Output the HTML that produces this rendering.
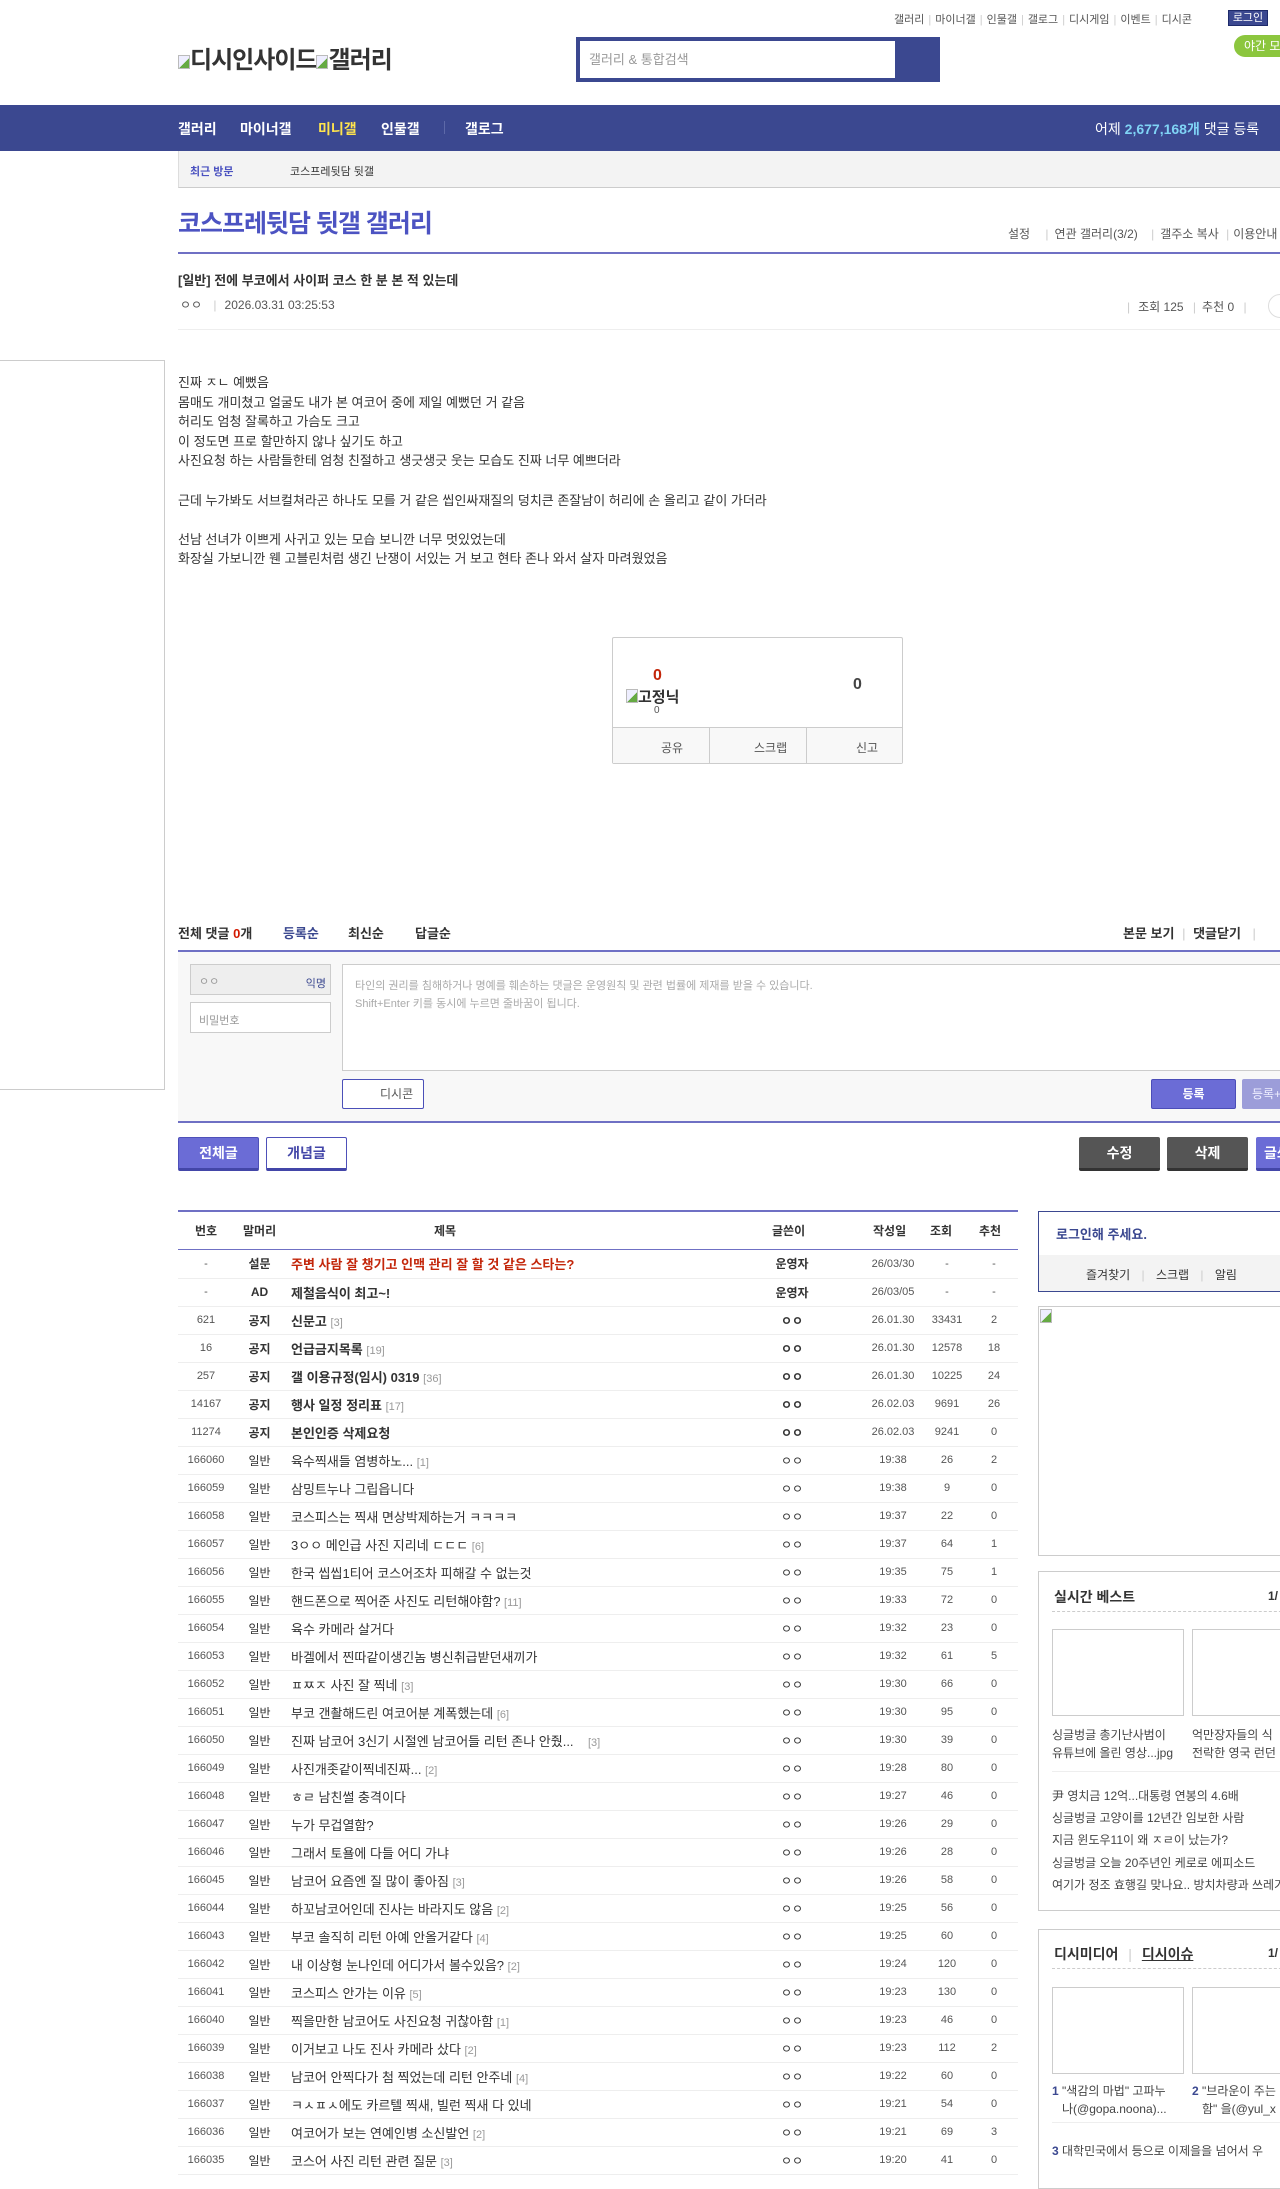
<!DOCTYPE html>
<html><head><meta charset="utf-8"><style>
*{margin:0;padding:0;box-sizing:border-box}
body{width:1280px;height:2156px;overflow:hidden;position:relative;background:#fff;font-family:"Liberation Sans","Noto Sans CJK KR",sans-serif;color:#333;font-size:12px}
.a{position:absolute;white-space:nowrap}
.brk{display:inline-block;width:12px;height:14px;border:1px solid #bbb;background:linear-gradient(135deg,#eef 55%,#6a4 55%);vertical-align:-1px}
table{border-collapse:collapse;width:840px;table-layout:fixed}
td{height:28px;border-bottom:1px solid #eee;text-align:center;font-size:12px;color:#333;white-space:nowrap;overflow:hidden}
td.t{text-align:left;padding-left:6px;font-size:13px}
td.n{font-size:11px;color:#555}
.r{color:#999;font-size:11px}
.sb{position:absolute;border:1px solid #ccc}
.tl i{font-style:normal;color:#ccc;margin:0 4px}
</style></head><body>
<!-- top links -->
<div class="a tl" style="left:894px;top:11px;font-size:11px;color:#555">갤러리<i>|</i>마이너갤<i>|</i>인물갤<i>|</i>갤로그<i>|</i>디시게임<i>|</i>이벤트<i>|</i>디시콘</div>
<div class="a" style="left:1228px;top:10px;width:40px;height:16px;background:#3b4890;border:1px solid #1e2a6a;color:#fff;font-size:11px;text-align:center;line-height:14px">로그인</div>
<div class="a" style="left:1234px;top:35px;width:70px;height:22px;background:#8cc63e;border-radius:11px;color:#fff;font-size:12px;line-height:22px;padding-left:10px">야간 모드</div>
<div class="a" style="left:178px;top:40px;font-size:24px;font-weight:bold;color:#333;letter-spacing:-1px"><span class="brk"></span>디시인사이드<span class="brk"></span>갤러리</div>
<div class="a" style="left:576px;top:37px;width:364px;height:45px;background:#3b4890"></div>
<div class="a" style="left:580px;top:41px;width:315px;height:37px;background:#fff;font-size:13px;color:#999;line-height:37px;padding-left:9px">갤러리 &amp; 통합검색</div>
<!-- nav -->
<div class="a" style="left:0;top:105px;width:1280px;height:46px;background:#3b4890"></div>
<div class="a" style="left:178px;top:119px;font-size:14px;font-weight:bold;color:#fff">갤러리</div>
<div class="a" style="left:240px;top:119px;font-size:14px;font-weight:bold;color:#fff">마이너갤</div>
<div class="a" style="left:318px;top:119px;font-size:14px;font-weight:bold;color:#ffe44d">미니갤</div>
<div class="a" style="left:381px;top:119px;font-size:14px;font-weight:bold;color:#fff">인물갤</div>
<div class="a" style="left:444px;top:121px;width:1px;height:13px;background:#5d69a8"></div>
<div class="a" style="left:465px;top:119px;font-size:14px;font-weight:bold;color:#fff">갤로그</div>
<div class="a" style="left:1095px;top:119px;font-size:14px;color:#fff">어제 <b style="color:#7fd3f5">2,677,168개</b> 댓글 등록</div>
<!-- recent -->
<div class="a" style="left:178px;top:151px;width:1102px;height:37px;background:#f3f3f3;border-left:1px solid #ddd;border-bottom:1px solid #ccc"></div>
<div class="a" style="left:190px;top:163px;font-size:11px;font-weight:bold;color:#4b52c0">최근 방문</div>
<div class="a" style="left:290px;top:163px;font-size:11px;color:#333">코스프레뒷담 뒷갤</div>
<!-- title -->
<div class="a" style="left:178px;top:204px;font-size:25px;font-weight:bold;color:#4c53c2;letter-spacing:-1px">코스프레뒷담 뒷갤 갤러리</div>
<div class="a" style="left:1008px;top:225px;font-size:12px;color:#555">설정 <span style="color:#ccc;margin:0 6px 0 12px">|</span>연관 갤러리(3/2) <span style="color:#ccc;margin:0 6px 0 10px">|</span>갤주소 복사 <span style="color:#ccc;margin:0 4px">|</span>이용안내</div>
<div class="a" style="left:178px;top:252px;width:1102px;height:2px;background:#6f70c4"></div>
<div class="a" style="left:178px;top:270px;font-size:13px;font-weight:bold;color:#333">[일반] 전에 부코에서 사이퍼 코스 한 분 본 적 있는데</div>
<div class="a" style="left:180px;top:296px;font-size:12px;color:#555">ㅇㅇ <span style="color:#ccc;margin:0 8px">|</span>2026.03.31 03:25:53</div>
<div class="a" style="left:1127px;top:298px;font-size:12px;color:#555"><span style="color:#ccc;margin-right:8px">|</span>조회 125 <span style="color:#ccc;margin:0 6px">|</span>추천 0 <span style="color:#ccc;margin-left:6px">|</span></div>
<div class="a" style="left:1268px;top:294px;width:24px;height:24px;border:1px solid #ddd;border-radius:12px"></div>
<div class="a" style="left:178px;top:329px;width:1102px;height:1px;background:#eee"></div>
<!-- left ad box -->
<div class="a" style="left:-1px;top:360px;width:166px;height:730px;border:1px solid #ccc"></div>
<!-- body -->
<div class="a" style="left:178px;top:373px;font-size:13px;line-height:19.6px;color:#333">진짜 ㅈㄴ 예뻤음<br>몸매도 개미쳤고 얼굴도 내가 본 여코어 중에 제일 예뻤던 거 같음<br>허리도 엄청 잘록하고 가슴도 크고<br>이 정도면 프로 할만하지 않나 싶기도 하고<br>사진요청 하는 사람들한테 엄청 친절하고 생긋생긋 웃는 모습도 진짜 너무 예쁘더라<br><br>근데 누가봐도 서브컬쳐라곤 하나도 모를 거 같은 씹인싸재질의 덩치큰 존잘남이 허리에 손 올리고 같이 가더라<br><br>선남 선녀가 이쁘게 사귀고 있는 모습 보니깐 너무 멋있었는데<br>화장실 가보니깐 웬 고블린처럼 생긴 난쟁이 서있는 거 보고 현타 존나 와서 살자 마려웠었음</div>
<!-- recommend box -->
<div class="a" style="left:612px;top:637px;width:291px;height:127px;border:1px solid #ccc;border-radius:2px"></div>
<div class="a" style="left:613px;top:727px;width:289px;height:36px;background:#f8f8f8;border-top:1px solid #ccc"></div>
<div class="a" style="left:709px;top:728px;width:1px;height:35px;background:#ccc"></div>
<div class="a" style="left:806px;top:728px;width:1px;height:35px;background:#ccc"></div>
<div class="a" style="left:653px;top:667px;font-size:16px;font-weight:bold;color:#c3260a">0</div>
<div class="a" style="left:626px;top:686px;font-size:15px;font-weight:bold;color:#333"><span class="brk"></span>고정닉</div>
<div class="a" style="left:654px;top:705px;font-size:10px;color:#555">0</div>
<div class="a" style="left:853px;top:676px;font-size:16px;font-weight:bold;color:#444">0</div>
<div class="a" style="left:661px;top:739px;font-size:12px;color:#555">공유</div>
<div class="a" style="left:754px;top:739px;font-size:12px;color:#555">스크랩</div>
<div class="a" style="left:856px;top:739px;font-size:12px;color:#555">신고</div>
<!-- comments -->
<div class="a" style="left:178px;top:923px;font-size:13px;font-weight:bold;color:#333">전체 댓글 <span style="color:#d31900">0</span>개</div>
<div class="a" style="left:283px;top:923px;font-size:13px;font-weight:bold;color:#3b4890">등록순</div>
<div class="a" style="left:348px;top:923px;font-size:13px;font-weight:bold;color:#333">최신순</div>
<div class="a" style="left:415px;top:923px;font-size:13px;font-weight:bold;color:#333">답글순</div>
<div class="a" style="left:1123px;top:923px;font-size:13px;font-weight:bold;color:#333">본문 보기 <span style="color:#ccc;font-weight:normal;margin:0 4px">|</span> 댓글닫기 <span style="color:#ccc;font-weight:normal;margin-left:8px">|</span></div>
<div class="a" style="left:178px;top:950px;width:1102px;height:2px;background:#6f70c4"></div>
<div class="a" style="left:178px;top:952px;width:1102px;height:170px;background:#f8f8f8"></div>
<div class="a" style="left:190px;top:964px;width:141px;height:31px;background:#eee;border:1px solid #ccc;font-size:11px;color:#999;padding:8px 0 0 8px">ㅇㅇ<span style="position:absolute;right:4px;top:10px;color:#3b4890">익명</span></div>
<div class="a" style="left:190px;top:1002px;width:141px;height:31px;background:#fff;border:1px solid #ccc;font-size:11px;color:#999;padding:9px 0 0 8px">비밀번호</div>
<div class="a" style="left:342px;top:964px;width:950px;height:107px;background:#fff;border:1px solid #ccc;font-size:11px;color:#aaa;line-height:18px;padding:12px 0 0 12px">타인의 권리를 침해하거나 명예를 훼손하는 댓글은 운영원칙 및 관련 법률에 제재를 받을 수 있습니다.<br>Shift+Enter 키를 동시에 누르면 줄바꿈이 됩니다.</div>
<div class="a" style="left:342px;top:1079px;width:82px;height:30px;background:#fff;border:1px solid #4b50b8;border-radius:2px;font-size:12px;color:#555;line-height:28px;padding-left:37px">디시콘</div>
<div class="a" style="left:1151px;top:1079px;width:85px;height:30px;background:#6b6cd6;border:1px solid #4b4db8;border-radius:2px;color:#fff;font-size:12px;font-weight:bold;text-align:center;line-height:28px">등록</div>
<div class="a" style="left:1242px;top:1079px;width:85px;height:30px;background:#9c9dd9;border-radius:2px;color:#eef;font-size:12px;line-height:30px;padding-left:10px">등록+추천</div>
<div class="a" style="left:178px;top:1121px;width:1102px;height:2px;background:#6f70c4"></div>
<!-- buttons -->
<div class="a" style="left:178px;top:1137px;width:81px;height:34px;background:#6b6cd6;border:1px solid #4e50b9;border-bottom:3px solid #4346a8;border-radius:2px;color:#fff;font-size:14px;font-weight:bold;text-align:center;line-height:30px">전체글</div>
<div class="a" style="left:266px;top:1137px;width:81px;height:34px;background:#fff;border:1px solid #4e50b9;border-bottom:3px solid #4346a8;border-radius:2px;color:#4346a8;font-size:14px;font-weight:bold;text-align:center;line-height:30px">개념글</div>
<div class="a" style="left:1079px;top:1137px;width:81px;height:34px;background:#555;border-bottom:3px solid #333;border-radius:2px;color:#fff;font-size:14px;font-weight:bold;text-align:center;line-height:32px">수정</div>
<div class="a" style="left:1167px;top:1137px;width:81px;height:34px;background:#555;border-bottom:3px solid #333;border-radius:2px;color:#fff;font-size:14px;font-weight:bold;text-align:center;line-height:32px">삭제</div>
<div class="a" style="left:1256px;top:1137px;width:81px;height:34px;background:#6b6cd6;border-bottom:3px solid #4346a8;border-radius:2px;color:#fff;font-size:14px;font-weight:bold;line-height:32px;padding-left:8px">글쓰기</div>
<!-- list -->
<div class="a" style="left:178px;top:1210px;width:840px;height:2px;background:#6f70c4"></div>
<div class="a" style="left:178px;top:1249px;width:840px;height:1px;background:#6f70c4"></div>
<div class="a" style="left:178px;top:1222px;width:840px;font-size:12px;font-weight:bold;color:#333">
<span class="a" style="left:17px">번호</span><span class="a" style="left:65px">말머리</span><span class="a" style="left:256px">제목</span><span class="a" style="left:594px">글쓴이</span><span class="a" style="left:695px">작성일</span><span class="a" style="left:752px">조회</span><span class="a" style="left:801px">추천</span></div>
<table class="a" style="left:178px;top:1250px">
<colgroup><col style="width:56px"><col style="width:51px"><col style="width:437px"><col style="width:140px"><col style="width:62px"><col style="width:46px"><col style="width:48px"></colgroup>
<tr><td class="n">-</td><td><b>설문</b></td><td class="t"><b style="color:#c3260a">주변 사람 잘 챙기고 인맥 관리 잘 할 것 같은 스타는?</b></td><td><b>운영자</b></td><td class="n">26/03/30</td><td class="n">-</td><td class="n">-</td></tr>
<tr><td class="n">-</td><td><b>AD</b></td><td class="t"><b>제철음식이 최고~!</b></td><td><b>운영자</b></td><td class="n">26/03/05</td><td class="n">-</td><td class="n">-</td></tr>
<tr><td class="n">621</td><td><b>공지</b></td><td class="t"><b>신문고</b> <span class="r">[3]</span></td><td><b>ㅇㅇ</b></td><td class="n">26.01.30</td><td class="n">33431</td><td class="n">2</td></tr>
<tr><td class="n">16</td><td><b>공지</b></td><td class="t"><b>언급금지목록</b> <span class="r">[19]</span></td><td><b>ㅇㅇ</b></td><td class="n">26.01.30</td><td class="n">12578</td><td class="n">18</td></tr>
<tr><td class="n">257</td><td><b>공지</b></td><td class="t"><b>갤 이용규정(임시) 0319</b> <span class="r">[36]</span></td><td><b>ㅇㅇ</b></td><td class="n">26.01.30</td><td class="n">10225</td><td class="n">24</td></tr>
<tr><td class="n">14167</td><td><b>공지</b></td><td class="t"><b>행사 일정 정리표</b> <span class="r">[17]</span></td><td><b>ㅇㅇ</b></td><td class="n">26.02.03</td><td class="n">9691</td><td class="n">26</td></tr>
<tr><td class="n">11274</td><td><b>공지</b></td><td class="t"><b>본인인증 삭제요청</b></td><td><b>ㅇㅇ</b></td><td class="n">26.02.03</td><td class="n">9241</td><td class="n">0</td></tr>
<tr><td class="n">166060</td><td>일반</td><td class="t">육수찍새들 염병하노... <span class="r">[1]</span></td><td>ㅇㅇ</td><td class="n">19:38</td><td class="n">26</td><td class="n">2</td></tr>
<tr><td class="n">166059</td><td>일반</td><td class="t">삼밍트누나 그립읍니다</td><td>ㅇㅇ</td><td class="n">19:38</td><td class="n">9</td><td class="n">0</td></tr>
<tr><td class="n">166058</td><td>일반</td><td class="t">코스피스는 찍새 면상박제하는거 ㅋㅋㅋㅋ</td><td>ㅇㅇ</td><td class="n">19:37</td><td class="n">22</td><td class="n">0</td></tr>
<tr><td class="n">166057</td><td>일반</td><td class="t">3ㅇㅇ 메인급 사진 지리네 ㄷㄷㄷ <span class="r">[6]</span></td><td>ㅇㅇ</td><td class="n">19:37</td><td class="n">64</td><td class="n">1</td></tr>
<tr><td class="n">166056</td><td>일반</td><td class="t">한국 씹씹1티어 코스어조차 피해갈 수 없는것</td><td>ㅇㅇ</td><td class="n">19:35</td><td class="n">75</td><td class="n">1</td></tr>
<tr><td class="n">166055</td><td>일반</td><td class="t">핸드폰으로 찍어준 사진도 리턴해야함? <span class="r">[11]</span></td><td>ㅇㅇ</td><td class="n">19:33</td><td class="n">72</td><td class="n">0</td></tr>
<tr><td class="n">166054</td><td>일반</td><td class="t">육수 카메라 살거다</td><td>ㅇㅇ</td><td class="n">19:32</td><td class="n">23</td><td class="n">0</td></tr>
<tr><td class="n">166053</td><td>일반</td><td class="t">바겔에서 찐따같이생긴놈 병신취급받던새끼가</td><td>ㅇㅇ</td><td class="n">19:32</td><td class="n">61</td><td class="n">5</td></tr>
<tr><td class="n">166052</td><td>일반</td><td class="t">ㅍㅉㅈ 사진 잘 찍네 <span class="r">[3]</span></td><td>ㅇㅇ</td><td class="n">19:30</td><td class="n">66</td><td class="n">0</td></tr>
<tr><td class="n">166051</td><td>일반</td><td class="t">부코 갠촬해드린 여코어분 계폭했는데 <span class="r">[6]</span></td><td>ㅇㅇ</td><td class="n">19:30</td><td class="n">95</td><td class="n">0</td></tr>
<tr><td class="n">166050</td><td>일반</td><td class="t">진짜 남코어 3신기 시절엔 남코어들 리턴 존나 안줬... &nbsp;&nbsp;&nbsp;<span class="r">[3]</span></td><td>ㅇㅇ</td><td class="n">19:30</td><td class="n">39</td><td class="n">0</td></tr>
<tr><td class="n">166049</td><td>일반</td><td class="t">사진개좃같이찍네진짜... <span class="r">[2]</span></td><td>ㅇㅇ</td><td class="n">19:28</td><td class="n">80</td><td class="n">0</td></tr>
<tr><td class="n">166048</td><td>일반</td><td class="t">ㅎㄹ 남친썰 충격이다</td><td>ㅇㅇ</td><td class="n">19:27</td><td class="n">46</td><td class="n">0</td></tr>
<tr><td class="n">166047</td><td>일반</td><td class="t">누가 무겁열함?</td><td>ㅇㅇ</td><td class="n">19:26</td><td class="n">29</td><td class="n">0</td></tr>
<tr><td class="n">166046</td><td>일반</td><td class="t">그래서 토욜에 다들 어디 가냐</td><td>ㅇㅇ</td><td class="n">19:26</td><td class="n">28</td><td class="n">0</td></tr>
<tr><td class="n">166045</td><td>일반</td><td class="t">남코어 요즘엔 질 많이 좋아짐 <span class="r">[3]</span></td><td>ㅇㅇ</td><td class="n">19:26</td><td class="n">58</td><td class="n">0</td></tr>
<tr><td class="n">166044</td><td>일반</td><td class="t">하꼬남코어인데 진사는 바라지도 않음 <span class="r">[2]</span></td><td>ㅇㅇ</td><td class="n">19:25</td><td class="n">56</td><td class="n">0</td></tr>
<tr><td class="n">166043</td><td>일반</td><td class="t">부코 솔직히 리턴 아예 안올거같다 <span class="r">[4]</span></td><td>ㅇㅇ</td><td class="n">19:25</td><td class="n">60</td><td class="n">0</td></tr>
<tr><td class="n">166042</td><td>일반</td><td class="t">내 이상형 눈나인데 어디가서 볼수있음? <span class="r">[2]</span></td><td>ㅇㅇ</td><td class="n">19:24</td><td class="n">120</td><td class="n">0</td></tr>
<tr><td class="n">166041</td><td>일반</td><td class="t">코스피스 안가는 이유 <span class="r">[5]</span></td><td>ㅇㅇ</td><td class="n">19:23</td><td class="n">130</td><td class="n">0</td></tr>
<tr><td class="n">166040</td><td>일반</td><td class="t">찍을만한 남코어도 사진요청 귀찮아함 <span class="r">[1]</span></td><td>ㅇㅇ</td><td class="n">19:23</td><td class="n">46</td><td class="n">0</td></tr>
<tr><td class="n">166039</td><td>일반</td><td class="t">이거보고 나도 진사 카메라 샀다 <span class="r">[2]</span></td><td>ㅇㅇ</td><td class="n">19:23</td><td class="n">112</td><td class="n">2</td></tr>
<tr><td class="n">166038</td><td>일반</td><td class="t">남코어 안찍다가 첨 찍었는데 리턴 안주네 <span class="r">[4]</span></td><td>ㅇㅇ</td><td class="n">19:22</td><td class="n">60</td><td class="n">0</td></tr>
<tr><td class="n">166037</td><td>일반</td><td class="t">ㅋㅅㅍㅅ에도 카르텔 찍새, 빌런 찍새 다 있네</td><td>ㅇㅇ</td><td class="n">19:21</td><td class="n">54</td><td class="n">0</td></tr>
<tr><td class="n">166036</td><td>일반</td><td class="t">여코어가 보는 연예인병 소신발언 <span class="r">[2]</span></td><td>ㅇㅇ</td><td class="n">19:21</td><td class="n">69</td><td class="n">3</td></tr>
<tr><td class="n">166035</td><td>일반</td><td class="t">코스어 사진 리턴 관련 질문 <span class="r">[3]</span></td><td>ㅇㅇ</td><td class="n">19:20</td><td class="n">41</td><td class="n">0</td></tr>
</table>
<!-- sidebar -->
<div class="sb" style="left:1038px;top:1211px;width:260px;height:81px;border:1px solid #3b4890"></div>
<div class="a" style="left:1039px;top:1255px;width:250px;height:36px;background:#f3f3f3"></div>
<div class="a" style="left:1056px;top:1224px;font-size:13px;font-weight:bold;color:#3b4890">로그인해 주세요.</div>
<div class="a" style="left:1086px;top:1266px;font-size:12px;color:#333">즐겨찾기 <span style="color:#ccc;margin:0 8px">|</span> 스크랩 <span style="color:#ccc;margin:0 8px">|</span> 알림</div>
<div class="a" style="left:1038px;top:1306px;width:260px;height:250px;border-top:1px solid #ccc;border-left:1px solid #ccc;border-bottom:1px solid #ccc"></div>
<div class="a" style="left:1040px;top:1309px"><span class="brk"></span></div>
<div class="sb" style="left:1038px;top:1571px;width:260px;height:340px"></div>
<div class="a" style="left:1054px;top:1587px;font-size:14px;font-weight:bold;color:#333">실시간 베스트</div>
<div class="a" style="left:1268px;top:1589px;font-size:12px;font-weight:bold;color:#333">1/</div>
<div class="a" style="left:1052px;top:1611px;width:240px;border-top:1px dashed #ccc"></div>
<div class="sb" style="left:1052px;top:1629px;width:132px;height:87px"></div>
<div class="sb" style="left:1192px;top:1629px;width:132px;height:87px"></div>
<div class="a" style="left:1052px;top:1726px;font-size:12px;line-height:18px;color:#444">싱글벙글 총기난사범이<br>유튜브에 올린 영상...jpg</div>
<div class="a" style="left:1192px;top:1726px;font-size:12px;line-height:18px;color:#444">억만장자들의 식<br>전락한 영국 런던</div>
<div class="a" style="left:1052px;top:1771px;width:240px;height:1px;background:#eee"></div>
<div class="a" style="left:1052px;top:1785px;font-size:12px;line-height:22.2px;color:#444">尹 영치금 12억...대통령 연봉의 4.6배<br>싱글벙글 고양이를 12년간 임보한 사람<br>지금 윈도우11이 왜 ㅈㄹ이 났는가?<br>싱글벙글 오늘 20주년인 케로로 에피소드<br>여기가 정조 효행길 맞나요.. 방치차량과 쓰레기</div>
<div class="sb" style="left:1038px;top:1929px;width:260px;height:260px"></div>
<div class="a" style="left:1054px;top:1944px;font-size:14px;font-weight:bold;color:#333">디시미디어 <span style="color:#ccc;font-weight:normal;margin:0 6px">|</span> <u>디시이슈</u></div>
<div class="a" style="left:1268px;top:1946px;font-size:12px;font-weight:bold;color:#333">1/</div>
<div class="a" style="left:1052px;top:1968px;width:240px;border-top:1px dashed #ccc"></div>
<div class="sb" style="left:1052px;top:1987px;width:132px;height:87px"></div>
<div class="sb" style="left:1192px;top:1987px;width:132px;height:87px"></div>
<div class="a" style="left:1052px;top:2082px;font-size:12px;line-height:18px;color:#444"><b style="color:#3b4890">1</b> "색감의 마법" 고파누<br>&nbsp;&nbsp;&nbsp;나(@gopa.noona)...</div>
<div class="a" style="left:1192px;top:2082px;font-size:12px;line-height:18px;color:#444"><b style="color:#3b4890">2</b> "브라운이 주는<br>&nbsp;&nbsp;&nbsp;함" 을(@yul_x</div>
<div class="a" style="left:1052px;top:2122px;width:240px;height:1px;background:#eee"></div>
<div class="a" style="left:1052px;top:2142px;font-size:12px;color:#444"><b style="color:#3b4890">3</b> 대학민국에서 등으로 이제을을 넘어서 우</div>
</body></html>
